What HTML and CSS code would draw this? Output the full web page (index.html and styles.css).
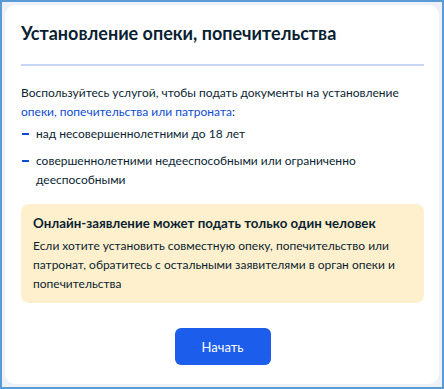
FILE: index.html
```html
<!DOCTYPE html>
<html lang="ru">
<head>
    <meta charset="UTF-8">
    <meta name="viewport" content="width=device-width, initial-scale=1.0">
    <title>Установление опеки, попечительства</title>
    <link rel="stylesheet" href="styles.css">
</head>
<body>
    <div class="frame">
        <div class="card">
            <h1 class="title">Установление опеки, попечительства</h1>
            <hr class="divider">
            <p class="intro">
                Воспользуйтесь услугой, чтобы подать документы на установление
                <a href="#">опеки, попечительства или патроната</a>:
            </p>
            <ul class="cases">
                <li>над несовершеннолетними до 18 лет</li>
                <li>совершеннолетними недееспособными или ограниченно дееспособными</li>
            </ul>
            <div class="notice">
                <h2>Онлайн-заявление может подать только один человек</h2>
                <p>Если хотите установить совместную опеку, попечительство или патронат, обратитесь с остальными заявителями в орган опеки и попечительства</p>
            </div>
            <div class="actions">
                <button type="button" class="start">Начать</button>
            </div>
        </div>
    </div>
</body>
</html>
```

FILE: styles.css
```css
html, body {
    margin: 0;
    padding: 0;
    height: 100%;
}

body {
    font-family: Lato, "Noto Sans", sans-serif;
    color: #0b1f33;
    background-color: #edf2fa;
}

.frame {
    box-sizing: border-box;
    height: 389px;
    border: 2px solid #5b9bd5;
    padding: 3px;
    background-color: #edf2fa;
}

.card {
    box-sizing: border-box;
    height: 100%;
    background: white;
    border-radius: 10px;
    padding: 15px 15px 0 16px;
}

.title {
    margin: 0;
    font-size: 18px;
    font-weight: 700;
    line-height: 26px;
}

.divider {
    margin: 18px 0 0;
    border: none;
    height: 2px;
    background-color: #c8d6f5;
}

.intro {
    margin: 17px 0 0;
    font-size: 12px;
    line-height: 19px;
}

.intro a {
    color: #0d4cd3;
    text-decoration: none;
}

.cases {
    list-style: none;
    margin: 3px 0 0;
    padding: 0;
    font-size: 12px;
    line-height: 19px;
}

.cases li {
    position: relative;
    padding-left: 15px;
    margin-bottom: 8px;
}

.cases li::before {
    content: "";
    position: absolute;
    left: 1px;
    top: 9px;
    width: 7px;
    height: 2px;
    background-color: #0d4cd3;
}

.notice {
    margin-top: 15px;
    background-color: #fef0cc;
    border-radius: 8px;
    padding: 9px 12px 10px;
}

.notice h2 {
    margin: 0;
    font-size: 13.3px;
    font-weight: 700;
    line-height: 20px;
}

.notice p {
    margin: 3px 0 0;
    font-size: 12px;
    line-height: 19px;
}

.actions {
    display: flex;
    justify-content: center;
    margin-top: 25px;
}

.start {
    width: 96px;
    height: 37px;
    border: none;
    border-radius: 6px;
    background-color: #1d5deb;
    color: white;
    font-family: Lato, "Noto Sans", sans-serif;
    font-size: 13px;
    cursor: pointer;
}
```
